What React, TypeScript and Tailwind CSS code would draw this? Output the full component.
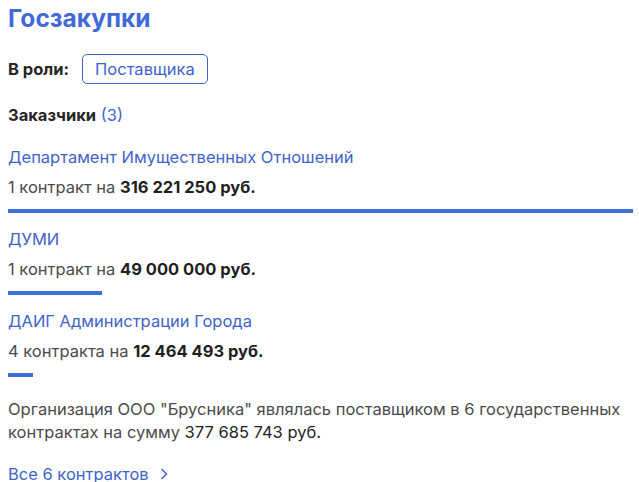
import React from "react";

const items = [
  { name: "Департамент Имущественных Отношений", count: "1 контракт", sum: "316 221 250 руб.", w: 625 },
  { name: "ДУМИ", count: "1 контракт", sum: "49 000 000 руб.", w: 94 },
  { name: "ДАИГ Администрации Города", count: "4 контракта", sum: "12 464 493 руб.", w: 25 },
];

export default function App() {
  return (
    <div className="bg-white w-[639px] h-[482px] overflow-hidden px-2 pt-[1px] text-[16.5px] text-[#4a4a4a]" style={{ fontFamily: "Inter, 'Noto Sans', sans-serif" }}>
      <h1 className="text-[24.5px] font-bold text-[#4169d8] leading-[34px]">Госзакупки</h1>
      <div className="flex items-center gap-[13px] mt-[19px]">
        <span className="font-bold text-[#262626]">В роли:</span>
        <span className="border border-[#3f63c8] rounded-[5px] px-[12px] h-[30px] flex items-center text-[#3f63c8]">Поставщика</span>
      </div>
      <div className="mt-[19px] leading-[24px]">
        <span className="font-bold text-[#262626]">Заказчики</span>{" "}
        <span className="text-[#3f63c8]">(3)</span>
      </div>
      <div className="mt-[18px] flex flex-col">
        {items.map((it, i) => (
          <div key={i} className="flex flex-col mb-[14px]">
            <a className="text-[#3f63c8] leading-[24px]">{it.name}</a>
            <div className="leading-[24px] mt-[6px]">
              {it.count} на <b className="font-bold text-[#1f1f1f]">{it.sum}</b>
            </div>
            <div className="h-[4px] bg-[#3c6fd9] mt-[10px]" style={{ width: it.w }} />
          </div>
        ))}
      </div>
      <p className="leading-[23px] mt-[7px]">
        Организация ООО "Брусника" являлась поставщиком в 6 государственных контрактах на сумму <span className="text-[#1f1f1f]">377 685 743 руб.</span>
      </p>
      <a className="mt-[18px] flex items-center gap-[11px] text-[#3f63c8] leading-[24px]">
        Все 6 контрактов
        <svg width="8" height="12" viewBox="0 0 8 12" fill="none" stroke="#3f63c8" strokeWidth="1.5"><path d="M1.5 1 L6.5 6 L1.5 11" /></svg>
      </a>
    </div>
  );
}
